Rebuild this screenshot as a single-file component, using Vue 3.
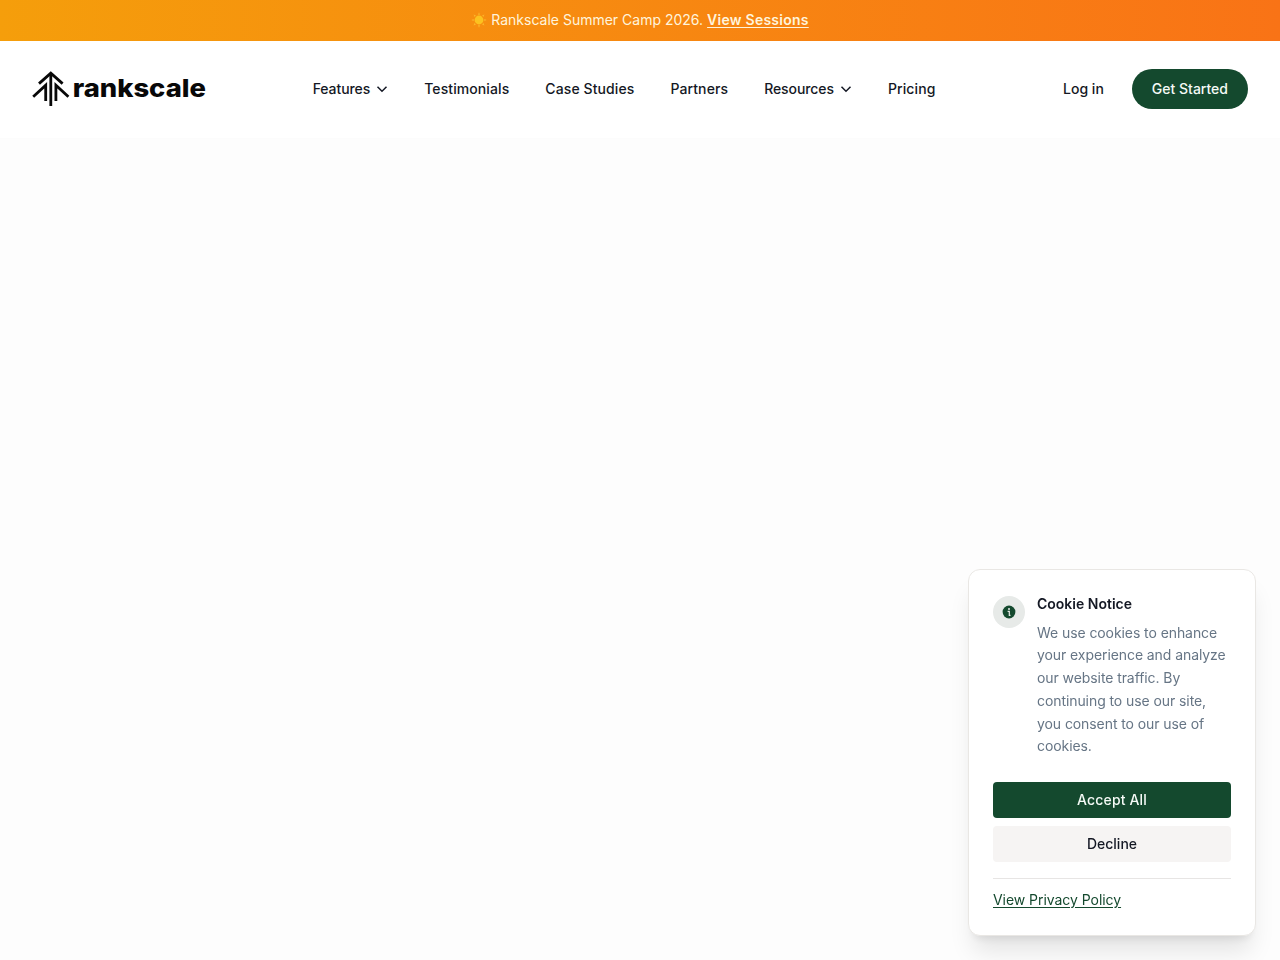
<script setup>
const links = [
  { label: 'Features', menu: true },
  { label: 'Testimonials' },
  { label: 'Case Studies' },
  { label: 'Partners' },
  { label: 'Resources', menu: true },
  { label: 'Pricing' }
]
const rays = [0, 45, 90, 135, 180, 225, 270, 315]
</script>

<template>
  <div class="page">
    <div class="banner">
      <svg class="sun" viewBox="0 0 16 16" aria-hidden="true">
        <path v-for="r in rays" :key="r" d="M8 .3 9 2.7H7Z" :transform="`rotate(${r} 8 8)`" fill="#fbb52b" />
        <circle cx="8" cy="8" r="4.4" fill="#fcc21f" />
      </svg>
      <span>Rankscale Summer Camp 2026.</span>
      <a class="sessions">View Sessions</a>
    </div>
    <header class="header">
      <svg class="logo" width="176" height="40" viewBox="0 0 176 40" role="img" aria-label="rankscale">
        <g fill="none" stroke="#080808" stroke-width="2.8">
          <path d="M18.8 4V37" />
          <path d="M7 14.6 18.8 4.2 30.6 14.6" />
          <path d="M1.2 27.8 13.7 16.2V32" />
          <path d="M36.4 27.8 23.9 16.2V32" />
        </g>
        <text x="40.7" y="28" textLength="133.3" lengthAdjust="spacingAndGlyphs">rankscale</text>
      </svg>
      <nav class="nav">
        <a v-for="l in links" :key="l.label" class="link" :class="{ menu: l.menu }">
          {{ l.label }}
          <svg v-if="l.menu" width="12" height="12" viewBox="0 0 12 12"><path d="M1.5 3.8 6 8.2 10.5 3.8" /></svg>
        </a>
      </nav>
      <div class="actions">
        <a>Log in</a>
        <a class="start">Get Started</a>
      </div>
    </header>
    <aside class="cookie">
      <div class="notice">
        <div class="badge">
          <svg width="14" height="14" viewBox="0 0 14 14">
            <circle cx="7" cy="7" r="6.4" fill="#14492e" />
            <circle cx="7" cy="4" r="1" fill="#e7eae8" />
            <path d="M5.6 6.3H7.3V10.3H8.5" fill="none" stroke="#e7eae8" stroke-width="1.2" />
          </svg>
        </div>
        <div class="copy">
          <h2>Cookie Notice</h2>
          <p>We use cookies to enhance your experience and analyze our website traffic. By continuing to use our site, you consent to our use of cookies.</p>
        </div>
      </div>
      <div class="buttons">
        <button class="accept">Accept All</button>
        <button class="decline">Decline</button>
      </div>
      <div class="policy"><a>View Privacy Policy</a></div>
    </aside>
  </div>
</template>

<style>
body { background: #fdfdfd; }
</style>

<style scoped>
.page {
  min-height: 960px;
  background: #fdfdfd;
  color: #141824;
  font-family: Inter, "Liberation Sans", sans-serif;
  font-size: 14px;
  line-height: 20px;
}
.banner {
  box-sizing: border-box;
  height: 41px;
  padding-bottom: 1px;
  display: flex;
  align-items: center;
  justify-content: center;
  gap: 4px;
  background: linear-gradient(90deg, #f59e0b, #f97316);
  color: #fff4dc;
}
.sun { width: 16px; height: 16px; }
.sessions {
  font-weight: 600;
  letter-spacing: 0.25px;
  text-decoration: underline;
  text-underline-offset: 2px;
}
.header {
  box-sizing: border-box;
  height: 98px;
  padding: 0 32px 1px;
  display: flex;
  align-items: center;
  justify-content: space-between;
  background: #fff;
  border-bottom: 1px solid #fcfcfc;
  font-weight: 500;
}
.logo { margin-right: -23px; }
.logo text {
  font: 800 25px Inter, sans-serif;
  fill: #080808;
}
.nav { display: flex; gap: 36px; letter-spacing: 0.1px; }
.link { display: flex; align-items: center; gap: 6px; }
.link.menu { letter-spacing: -0.08px; }
.link path { fill: none; stroke: #141824; stroke-width: 1.5; }
.actions { display: flex; align-items: center; gap: 28px; }
.start {
  padding: 10px 20px;
  border-radius: 20px;
  background: #14492e;
  color: #f5faf6;
}
.cookie {
  position: fixed;
  right: 24px;
  bottom: 24px;
  box-sizing: border-box;
  width: 288px;
  height: 367px;
  padding: 24px;
  border: 1px solid #e9e7e4;
  border-radius: 12px;
  background: #fff;
  box-shadow: 0 20px 25px -5px rgba(0, 0, 0, .1), 0 8px 10px -6px rgba(0, 0, 0, .1);
}
.notice { display: flex; gap: 12px; }
.badge {
  flex: none;
  display: flex;
  align-items: center;
  justify-content: center;
  width: 32px;
  height: 32px;
  margin-top: 2px;
  border-radius: 50%;
  background: #e7eae8;
}
h2 { margin: 0 0 7.7px; font-size: 14px; line-height: 20px; font-weight: 600; }
p { margin: 0; line-height: 22.75px; letter-spacing: -0.08px; color: #667585; }
.buttons { display: grid; gap: 8px; margin-top: 23.8px; }
button {
  height: 36px;
  border: 0;
  border-radius: 4px;
  font: inherit;
  font-weight: 500;
}
.accept { background: #14492e; color: #f5faf6; letter-spacing: 0.15px; }
.decline { background: #f6f4f3; color: #141824; }
.policy { margin-top: 16px; padding-top: 11px; border-top: 1px solid #e7e5e4; }
.policy a { color: #14492e; letter-spacing: -0.05px; text-decoration: underline; text-underline-offset: 2px; }
</style>
